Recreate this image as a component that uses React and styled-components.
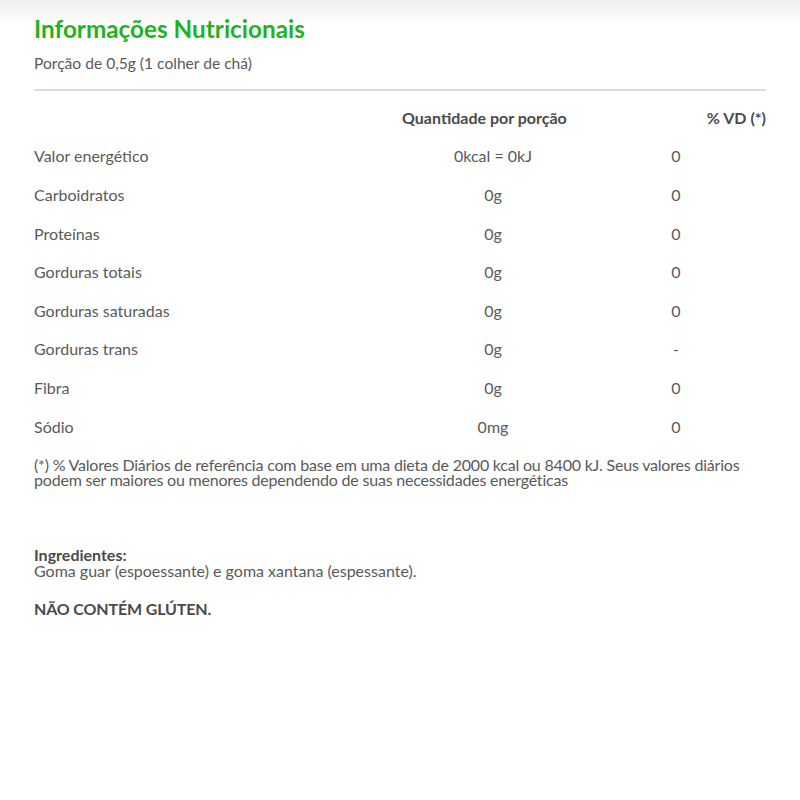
import React from 'react'
import styled, { createGlobalStyle } from 'styled-components'

const GlobalStyle = createGlobalStyle`
  html, body {
    margin: 0;
    padding: 0;
    background: #ffffff;
  }
  body {
    font-family: Lato, 'Open Sans', sans-serif;
    color: #555555;
  }
`;

const Page = styled.div`
  min-height: 800px;
  box-sizing: border-box;
  padding: 17px 34px 0 34px;
  background: linear-gradient(180deg, #efefef 0px, #ffffff 26px);
`;

const Title = styled.h2`
  margin: 0;
  font-size: 24.3px;
  line-height: 24px;
  font-weight: 700;
  color: #1fb321;
`;

const Portion = styled.div`
  margin-top: 12px;
  font-size: 15.6px;
  line-height: 20px;
  color: #5a5a5a;
`;

const Rule = styled.hr`
  margin: 16px 0 0 0;
  border: 0;
  height: 2px;
  background: #dcdcdc;
`;

const Table = styled.div`
  margin-top: 7px;
  display: grid;
  grid-template-columns: 366px 186px 1fr;
`;

const Cell = styled.div`
  height: 38.6px;
  display: flex;
  align-items: center;
  font-size: 16px;
  color: #5a5a5a;
  white-space: nowrap;
  justify-content: ${p => p.$align || 'flex-start'};
  padding-left: ${p => p.$pad || 0}px;
`;

const HeadCell = styled(Cell)`
  font-weight: 700;
  color: #4a4a4a;
`;

const Footnote = styled.p`
  margin: 12px 0 0 0;
  font-size: 16px;
  line-height: 15px;
  letter-spacing: -0.2px;
  color: #5a5a5a;
`;

const Ingredients = styled.div`
  margin-top: 60px;
  font-size: 16px;
  line-height: 16px;
  color: #5a5a5a;
`;

const IngredientsLabel = styled.div`
  font-weight: 700;
  color: #4a4a4a;
`;

const GlutenNote = styled.div`
  margin-top: 22px;
  font-size: 16px;
  line-height: 16px;
  font-weight: 700;
  letter-spacing: -0.15px;
  color: #4a4a4a;
`;

const rows = [
  ['Valor energético', '0kcal = 0kJ', '0'],
  ['Carboidratos', '0g', '0'],
  ['Proteínas', '0g', '0'],
  ['Gorduras totais', '0g', '0'],
  ['Gorduras saturadas', '0g', '0'],
  ['Gorduras trans', '0g', '-'],
  ['Fibra', '0g', '0'],
  ['Sódio', '0mg', '0'],
];

export default function App() {
  return (
    <>
      <GlobalStyle />
      <Page>
        <Title>Informações Nutricionais</Title>
        <Portion>Porção de 0,5g (1 colher de chá)</Portion>
        <Rule />
        <Table>
          <HeadCell />
          <HeadCell $pad={2}>Quantidade por porção</HeadCell>
          <HeadCell $align="flex-end">% VD (*)</HeadCell>
          {rows.map(([label, qty, vd]) => (
            <React.Fragment key={label}>
              <Cell>{label}</Cell>
              <Cell $align="center">{qty}</Cell>
              <Cell $align="center">{vd}</Cell>
            </React.Fragment>
          ))}
        </Table>
        <Footnote>
          (*) % Valores Diários de referência com base em uma dieta de 2000 kcal ou 8400 kJ. Seus valores diários podem ser maiores ou menores dependendo de suas necessidades energéticas
        </Footnote>
        <Ingredients>
          <IngredientsLabel>Ingredientes:</IngredientsLabel>
          Goma guar (espoessante) e goma xantana (espessante).
        </Ingredients>
        <GlutenNote>NÃO CONTÉM GLÚTEN.</GlutenNote>
      </Page>
    </>
  )
}
